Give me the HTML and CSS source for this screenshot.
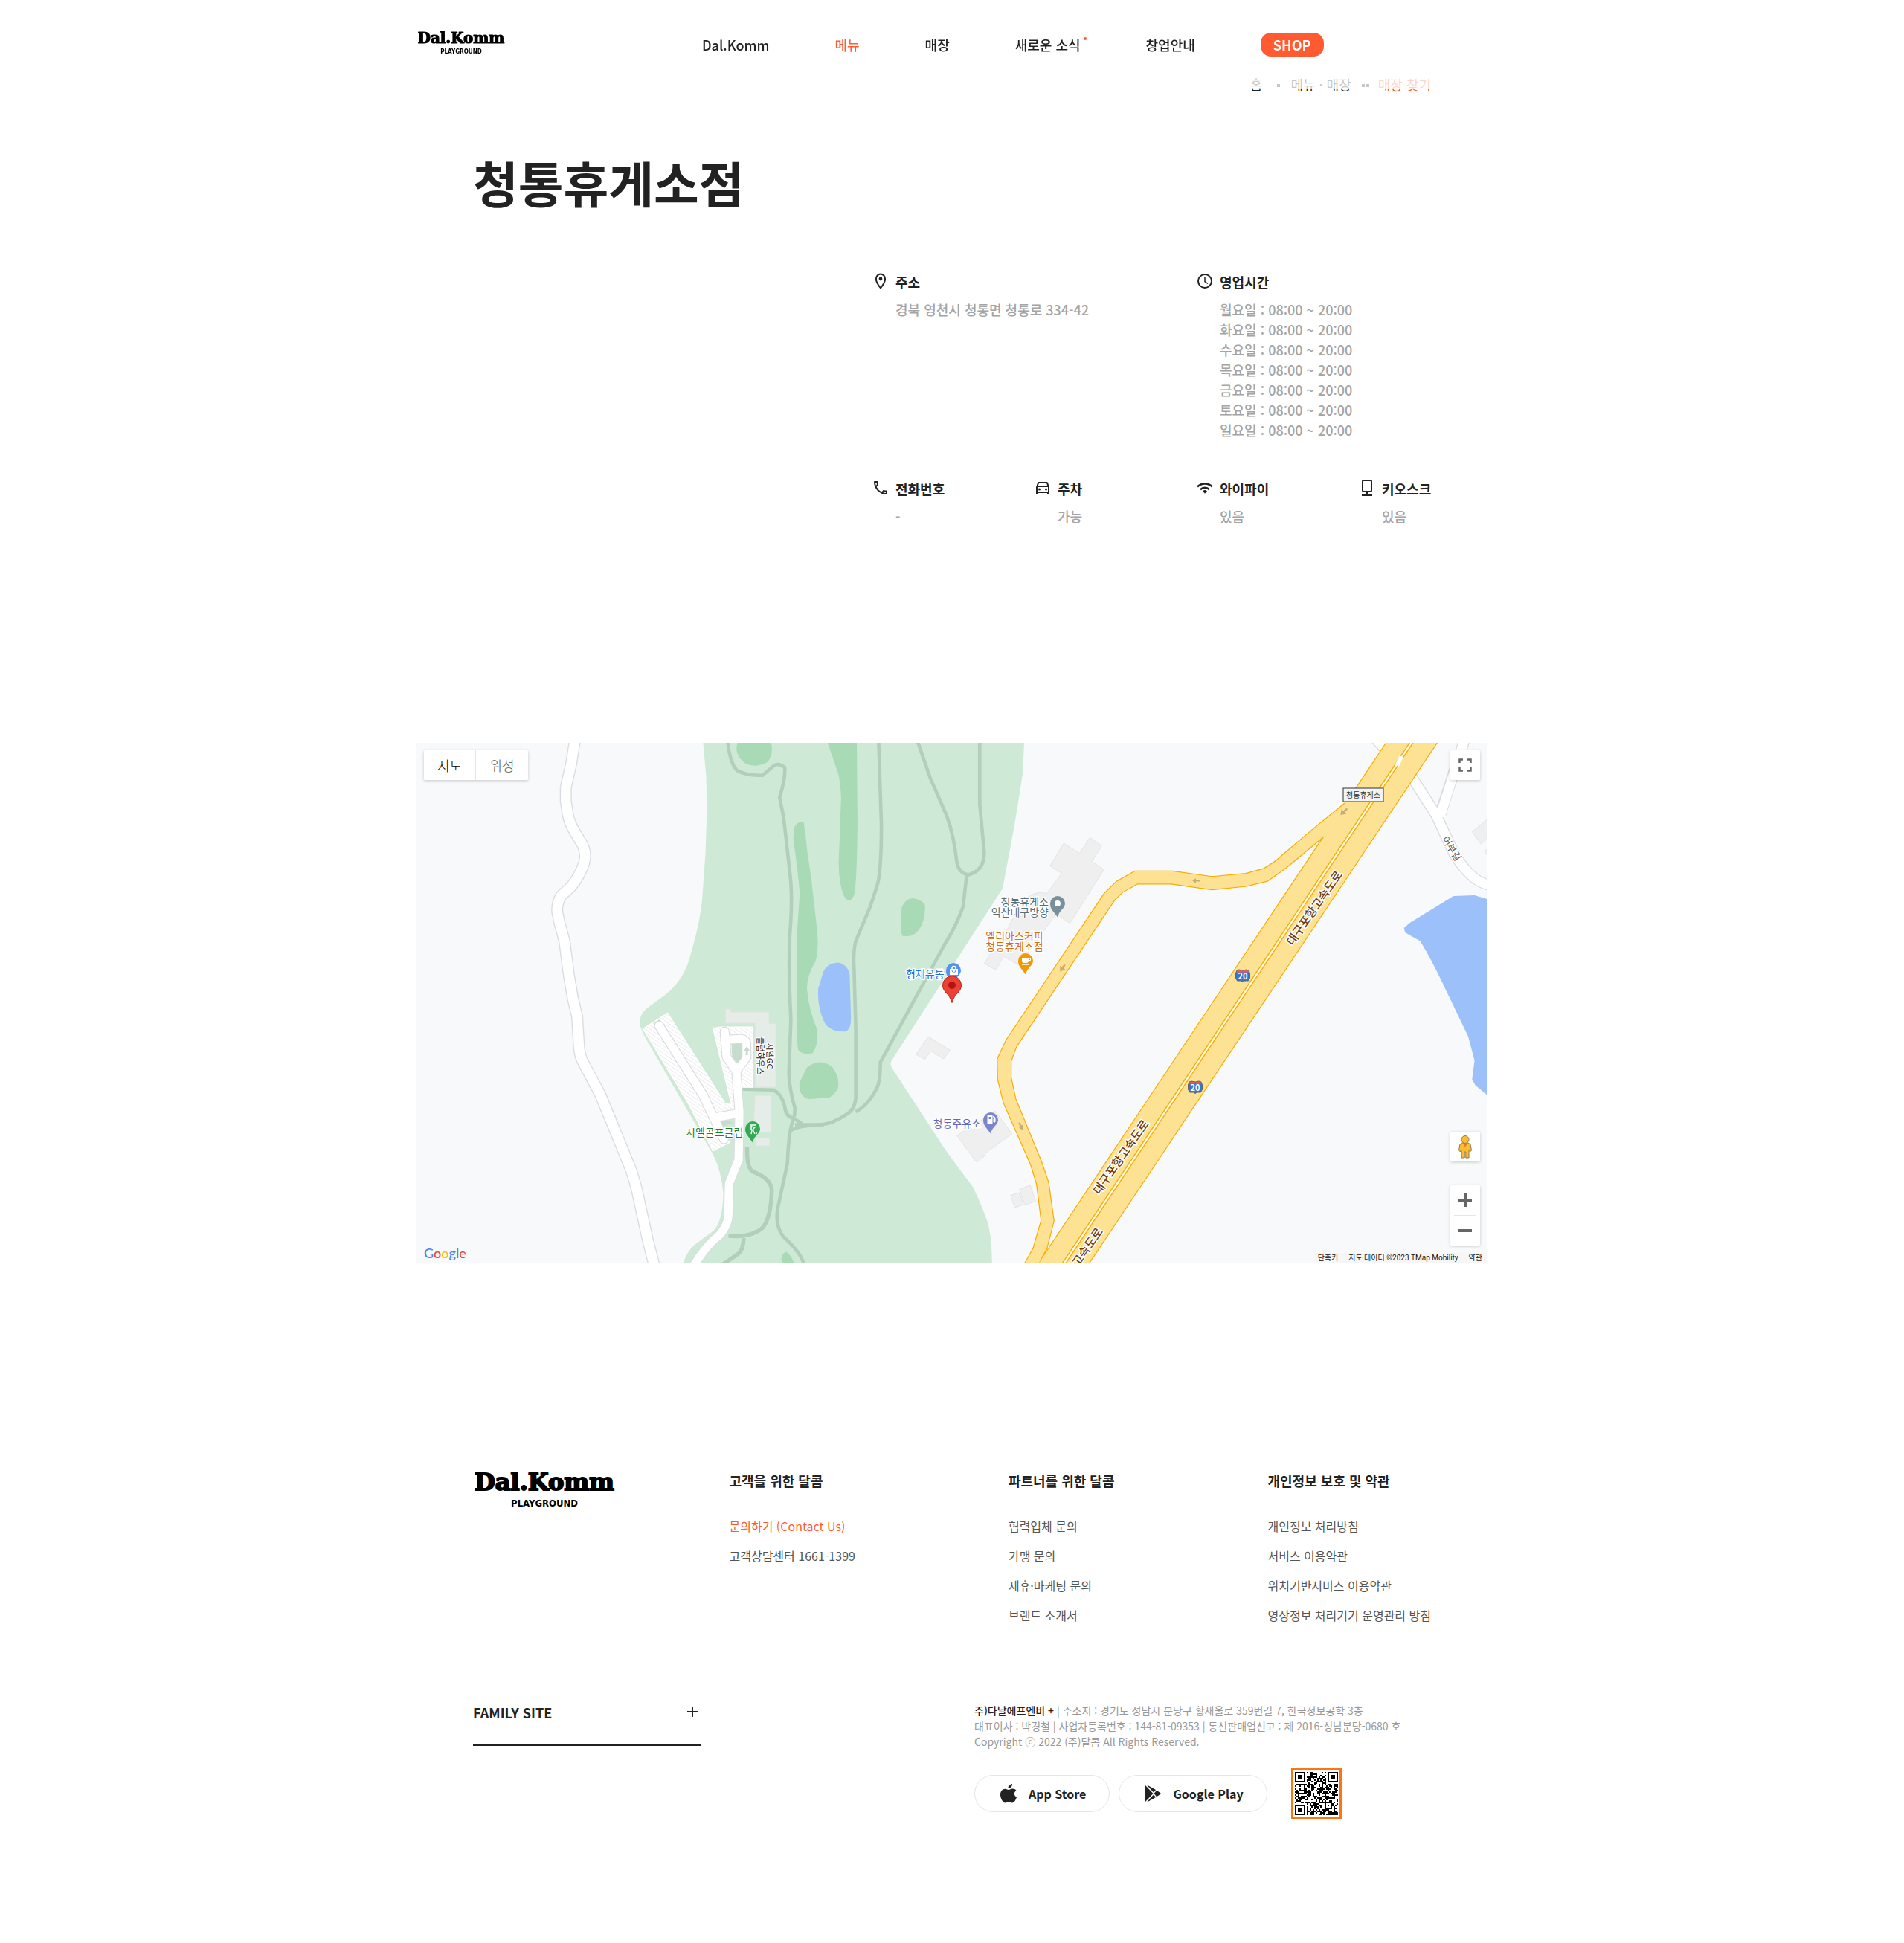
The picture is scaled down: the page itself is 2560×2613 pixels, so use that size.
FILE: index.html
```html
<!DOCTYPE html>
<html lang="ko">
<head>
<meta charset="utf-8">
<meta name="viewport" content="width=device-width, initial-scale=1">
<title>청통휴게소점 | Dal.Komm</title>
<link rel="stylesheet" href="styles.css">
</head>
<body>
<svg class="defs" width="0" height="0" aria-hidden="true">
  <defs>
    <symbol id="logo" viewBox="0 0 192 50">
      <text class="logo-name" x="96" y="26" text-anchor="middle">Dal.Komm</text>
      <text class="logo-sub" x="96" y="48" text-anchor="middle">PLAYGROUND</text>
    </symbol>
    <symbol id="pin" viewBox="-11 -11 22 30">
      <path d="M0-10a10 10 0 0 1 10 10c0 7-7.500 8-10 18.500C-7.500 8-10 7-10 0A10 10 0 0 1 0-10z"/>
    </symbol>
    <symbol id="shield" viewBox="0 0 20 18">
      <path d="M2 2l3-1 5 1 5-1 3 1 1.500 4v6l-2 4H12l-2 1.500L8 16H2.500l-2-4V6z" fill="#3a76c8" stroke="#5d6472"/>
      <path d="M2.500 2.500l3-1 4.500 1 4.500-1 3 1 1 2h-17z" fill="#e06055"/>
    </symbol>
  </defs>
</svg>

<header class="header">
  <div class="header-inner">
    <a class="brand" href="#" aria-label="Dal.Komm Playground"><svg width="120" height="31"><use href="#logo"/></svg></a>
    <nav class="nav">
      <a href="#">Dal.Komm</a>
      <a class="active" href="#">메뉴</a>
      <a href="#">매장</a>
      <a class="fresh" href="#">새로운 소식</a>
      <a href="#">창업안내</a>
      <a class="shop" href="#">SHOP</a>
    </nav>
  </div>
</header>

<main>
  <section class="inner">
    <ol class="crumbs">
      <li><a href="#">홈</a></li>
      <li><a href="#">메뉴 · 매장</a></li>
      <li class="current">매장 찾기</li>
    </ol>
    <h1>청통휴게소점</h1>
    <dl class="info">
      <div class="item wide">
        <svg viewBox="0 0 24 24" fill="none" stroke="#222" stroke-width="2"><path d="M12 21.500C8.500 17 5.900 13 5.900 9.200a6.100 6.600 0 0 1 12.200 0c0 3.800-2.600 7.800-6.100 12.300z"/><circle cx="12" cy="9" r="2.400" fill="#222" stroke="none"/></svg>
        <dt>주소</dt>
        <dd>경북 영천시 청통면 청통로 334-42</dd>
      </div>
      <div class="item wide">
        <svg viewBox="0 0 24 24" fill="none" stroke="#222" stroke-width="2"><circle cx="12" cy="12" r="9"/><path d="M12 7v5.500l4 3" stroke-width="1.500"/></svg>
        <dt>영업시간</dt>
        <dd>월요일 : 08:00 ~ 20:00</dd>
        <dd>화요일 : 08:00 ~ 20:00</dd>
        <dd>수요일 : 08:00 ~ 20:00</dd>
        <dd>목요일 : 08:00 ~ 20:00</dd>
        <dd>금요일 : 08:00 ~ 20:00</dd>
        <dd>토요일 : 08:00 ~ 20:00</dd>
        <dd>일요일 : 08:00 ~ 20:00</dd>
      </div>
      <div class="item">
        <svg viewBox="0 0 24 24" fill="#222"><path d="M6.540 5c.060.890.210 1.760.450 2.590l-1.200 1.200c-.410-1.200-.670-2.470-.760-3.790h1.510m9.860 12.020c.850.240 1.720.390 2.600.450v1.490c-1.320-.090-2.590-.350-3.800-.750l1.200-1.190M7.500 3H4c-.550 0-1 .450-1 1 0 9.390 7.610 17 17 17 .550 0 1-.450 1-1v-3.490c0-.550-.450-1-1-1-1.240 0-2.450-.200-3.570-.570a.84.84 0 0 0-.310-.050c-.260 0-.510.100-.710.290l-2.200 2.200a15.150 15.150 0 0 1-6.590-6.590l2.200-2.200c.280-.280.360-.670.250-1.020A11.360 11.360 0 0 1 8.500 4c0-.550-.450-1-1-1z"/></svg>
        <dt>전화번호</dt>
        <dd>-</dd>
      </div>
      <div class="item">
        <svg viewBox="0 0 24 24" fill="#222"><path d="M18.920 5.010C18.720 4.420 18.160 4 17.500 4h-11c-.660 0-1.210.420-1.420 1.010L3 11v9c0 .550.450 1 1 1h1c.550 0 1-.450 1-1v-1h12v1c0 .550.450 1 1 1h1c.550 0 1-.450 1-1v-9l-2.080-5.990zM6.850 6h10.290l1.040 3H5.810l1.040-3zM19 17H5v-6h14v6z"/><circle cx="7.500" cy="14" r="1.500"/><circle cx="16.500" cy="14" r="1.500"/></svg>
        <dt>주차</dt>
        <dd>가능</dd>
      </div>
      <div class="item">
        <svg viewBox="0 0 24 24" fill="none" stroke="#222" stroke-width="2.600"><path d="M2 10.500c5.500-5.400 14.500-5.400 20 0M6 14.200c3.400-3.200 8.600-3.200 12 0"/><path d="M9 16.500a4.300 4.300 0 0 1 6 0L12 19.700z" fill="#222" stroke="none"/></svg>
        <dt>와이파이</dt>
        <dd>있음</dd>
      </div>
      <div class="item">
        <svg viewBox="0 0 24 24" fill="none" stroke="#222" stroke-width="2"><rect x="6" y="2" width="12" height="15" rx="1.500"/><path d="M12 17v5M5 22h14"/></svg>
        <dt>키오스크</dt>
        <dd>있음</dd>
      </div>
    </dl>
  </section>

  <section class="map" aria-label="매장 지도">
    <svg class="map-art" viewBox="0 0 1440 700" preserveAspectRatio="xMidYMid slice">
      <defs>
        <pattern id="bays" width="9" height="9" patternUnits="userSpaceOnUse" patternTransform="rotate(35)"><rect width="9" height="9" fill="#fff"/><path d="M0 1h9" stroke="#e4e6ea" stroke-width="1.500"/></pattern>
      </defs>
      <rect width="1440" height="700" fill="#f8f9fb"/>
      <g transform="translate(-10 -9) scale(.4592)" fill="none">
        <path fill="#ceead6" d="M861 18L870 120 872 220 868 340 858 480Q850 560 815 670 790 730 740 765L695 798Q670 820 677 850L690 880 890 1225Q915 1275 920 1340 918 1425 890 1450L835 1490Q810 1515 802 1546H1707L1705 1480 1696 1429Q1680 1380 1651 1320 1620 1280 1568 1208L1413 970Q1407 960 1413 950L1738 446 1773 259 1797 109 1801 18z"/>
        <g fill="#a8dab5">
          <path d="M962 18H1060Q1068 55 1050 75 1015 95 985 80 950 55 962 18zM1225 18H1311L1313 250Q1312 400 1305 460 1290 500 1272 465 1258 430 1258 370L1265 180Q1262 125 1255 105zM1127 270Q1135 250 1155 250 1162 290 1165 330L1178 420 1195 570Q1200 630 1190 660 1165 700 1165 740 1170 800 1195 860 1200 900 1182 928 1155 935 1140 920 1133 900 1135 750V590L1144 460 1137 390 1125 300zM1443 500Q1455 475 1475 475 1500 478 1511 495 1512 545 1490 570 1475 590 1445 585 1438 575 1440 530zM1165 970Q1205 940 1240 970 1262 1000 1256 1030 1240 1065 1210 1060L1170 1063Q1140 1055 1143 1015zM1092 1546Q1085 1515 1105 1510 1120 1520 1128 1546z"/>
        </g>
        <path fill="#9cc0f9" d="M1213 690Q1225 664 1255 663 1280 665 1290 695L1294 825Q1295 855 1280 865 1240 868 1220 845 1195 800 1198 740z"/>
        <g stroke="#b2cfbc" stroke-width="10" stroke-linejoin="round">
          <path d="M933 18Q940 80 960 100 985 115 1035 115L1070 85Q1085 78 1100 92 1103 120 1085 180L1097 240 1115 400Q1124 470 1115 580 1110 680 1118 830L1112 990Q1115 1040 1130 1090L1128 1115M1375 18L1383 260Q1383 400 1370 440L1350 500 1308 600Q1300 630 1303 680L1308 860V1060Q1305 1095 1280 1108 1240 1135 1205 1138H1130M1671 18V200L1684 340Q1685 395 1635 407M1490 18L1525 120 1575 235Q1595 290 1604 370 1610 400 1633 405L1622 500Q1600 560 1568 610L1380 955Q1380 1010 1370 1030 1345 1080 1308 1100"/>
          <path d="M975 1034L1065 1036Q1090 1045 1100 1085 1102 1115 1128 1120L1150 1135M1128 1120Q1112 1140 1108 1250L1080 1380Q1070 1430 1095 1465 1150 1515 1155 1546M1215 1138Q1140 1140 1118 1155"/>
          <path stroke-width="12" d="M990 1203Q988 1260 1005 1275 1060 1295 1062 1330 1060 1410 1035 1440 1000 1470 935 1463M980 1470Q978 1505 965 1515L920 1546"/>
        </g>
        <path fill="#e6ece8" stroke="#dde3df" stroke-width="2" d="M926 799H943V808H1054V841H1074V1028H1013V841H926zM1013 1052H1060V1160H1008zM1016 1177H1056V1200H1016z"/>
        <path fill="#efefef" stroke="#e2e2e2" stroke-width="2" d="M1520 880L1585 920 1565 945 1528 922 1510 947 1485 932z"/>
        <path fill="url(#bays)" stroke="#fff" stroke-width="3" d="M685 857L757 811 925 1075 944 1080 890 855 915 852H1005V1028H960L962 1110 915 1125 938 1190 890 1215 820 1080z"/>
        <path fill="#c5ddcd" d="M715 840l18-10 10 10-18 12zM906 1120l45 12-30 10 12 48-10-4z"/>
        <g stroke-linejoin="round">
          <path stroke="#dadce0" stroke-width="35" d="M486 10L475 80 459 150V190L465 230Q470 255 485 280L508 318Q520 345 513 370 500 410 475 440L445 468Q432 490 434 515L440 545 455 600 468 700 480 770 492 820 497 900Q498 930 507 950L560 1050 650 1270 665 1320 700 1480 718 1550"/>
          <path stroke="#fff" stroke-width="29" d="M486 10L475 80 459 150V190L465 230Q470 255 485 280L508 318Q520 345 513 370 500 410 475 440L445 468Q432 490 434 515L440 545 455 600 468 700 480 770 492 820 497 900Q498 930 507 950L560 1050 650 1270 665 1320 700 1480 718 1550"/>
          <g stroke="#dadce0" stroke-width="29" stroke-linecap="round"><path d="M830 1556Q870 1490 910 1460 935 1430 935 1400L937 1310 965 1240 967 1100 958 980 930 940 924 865M958 980L988 940 987 900Q987 888 972 887L932 889M732 848L860 1050 922 1180M905 1115L965 1105"/></g>
          <g stroke="#fff" stroke-width="24" stroke-linecap="round"><path d="M830 1556Q870 1490 910 1460 935 1430 935 1400L937 1310 965 1240 967 1100 958 980 930 940 924 865M958 980L988 940 987 900Q987 888 972 887L932 889M732 848L860 1050 922 1180M905 1115L965 1105"/></g>
        </g>
        <path fill="#c5ddcd" d="M944 901H976V940L962 958 946 940zM989 908l8 13h-5v14h-6v-14h-5z"/>
      </g>
      <g transform="translate(710 -9) scale(.4719 .4592)" fill="none">
        <path fill="#efefef" stroke="#e2e2e2" stroke-width="2" d="M340 314L384 343 414 297 448 321 420 367 454 391 357 548 318 520 212 670 168 645 146 685 113 665 137 628 153 633Q200 500 240 470 270 450 290 462L334 402 300 380zM35 1170L145 1098 192 1165 115 1222 117 1228 90 1247zM188 1345L213 1337 225 1372 200 1381zM213 1328L244 1315 260 1362 229 1373zM1503 280L1547 243V300L1528 316zM1538 338l10-10v22z"/>
        <path fill="#9cc0f9" d="M1309 562L1325 547 1450 468 1510 466 1549 478V1054L1512 1022 1503 1005 1510 950 1492 880 1415 715Q1385 650 1355 600L1312 575z"/>
        <path stroke="#dadce0" stroke-width="33" d="M1215 -8L1265 50M1480 15L1412 230M1325 110L1400 230 1450 340Q1500 430 1560 438"/>
        <path stroke="#fff" stroke-width="27" d="M1215 -8L1265 50M1480 15L1412 235M1325 110L1400 230 1450 340Q1500 430 1560 438"/>
        <path fill="#fde293" stroke="#f9ab00" stroke-width="2.500" d="M260 1555L1264 10H1410L405 1555z"/>
        <path fill="#fde293" d="M1150 188L1040 280 960 350Q940 370 908 388L858 402 762 411 650 395H542L490 425 455 460 175 890 150 945 151 1005 168 1075 245 1255 262 1312 275 1418 252 1500 222 1555H262L292 1500 312 1420 297 1308 278 1250 203 1062 190 1000V952L205 910 485 480 508 457 550 433H645L762 450 860 440 920 425 975 385 1080 295 1160 240z"/>
        <path stroke="#f9ab00" stroke-width="2.500" d="M1140 196L1040 280 960 350Q940 370 908 388L858 402 762 411 650 395H542L490 425 455 460 175 890 150 945 151 1005 168 1075 245 1255 262 1312 275 1418 252 1500 222 1555M277 1528L292 1500 312 1420 297 1308 278 1250 203 1062 190 1000V952L205 910 485 480 508 457 550 433H645L762 450 860 440 920 425 975 385 1080 295L1070 308"/>
        <path stroke="#f9ab00" stroke-width="11" d="M333 1555L1336 10"/>
        <path stroke="#fffbe8" stroke-width="5" d="M333 1555L1336 10"/>
        <path stroke="#fff" stroke-width="12" d="M1289 86L1302 60"/>
        <path fill="#c8ac78" d="M1128 231l3-17 5 5 9-9 4 4-9 9 4 5zM706 423l10-7v5h13v5h-13v5zM329 689v-16l5 3 7-8 4 3-6 9 5 3zM222 1154l-12-10 5-2-5-9 5-2 4 9 5-2z"/>
      </g>
      <g class="road-name">
        <text transform="translate(1207 222) rotate(-55)" dy="6">대구포항고속도로</text>
        <text transform="translate(947 557) rotate(-55)" dy="6">대구포항고속도로</text>
        <text transform="translate(885 702) rotate(-55)" dy="6">대구포항고속도로</text>
      </g>
      <text class="street" transform="translate(1392 142) rotate(58)" dy="5">어부길</text>
      <g class="club"><text transform="translate(475 421) rotate(90)" dy="4">시엘GC</text><text transform="translate(462 421) rotate(90)" dy="4">클럽하우스</text></g>
      <rect x="1246" y="61" width="54" height="18" fill="#f1f3f4" stroke="#333"/>
      <text class="exit" x="1273" y="74">청통휴게소</text>
      <g class="shields">
        <use href="#shield" x="1101" y="304" width="20" height="18"/><text x="1111" y="318">20</text>
        <use href="#shield" x="1037" y="454" width="20" height="18"/><text x="1047" y="468">20</text>
      </g>
      <g class="poi">
        <text x="658" y="316" fill="#1a73e8">형제유통</text>
        <text x="362" y="529" fill="#188038">시엘골프클럽</text>
        <text class="end" x="850" y="219" fill="#546e7a">청통휴게소</text>
        <text class="end" x="850" y="233" fill="#546e7a">익산대구방향</text>
        <text class="mid" x="804" y="265" fill="#d56e0c">엘리아스커피</text>
        <text class="mid" x="804" y="279" fill="#d56e0c">청통휴게소점</text>
        <text class="end" x="759" y="517" fill="#5c6bc0">청통주유소</text>
      </g>
      <use href="#pin" x="851" y="205" width="22" height="30" fill="#78909c"/><circle cx="862" cy="216" r="4" fill="#fff"/>
      <use href="#pin" x="441" y="508" width="22" height="30" fill="#34a853"/>
      <path d="M448 514h9M450 516l5 1-4 4-1 5M452 520l3 6M450 515v5" stroke="#fff" stroke-width="1.500" fill="none"/><circle cx="457" cy="525" r="1" fill="#fff"/>
      <use href="#pin" x="761" y="496" width="22" height="30" fill="#7986cb"/>
      <path d="M768 501h6v11h-6zM775 502l3 2v6h-2v-4" fill="#fff" stroke="#fff"/><path d="M769.500 503h3v3h-3z" fill="#7986cb"/>
      <use href="#pin" x="808" y="282" width="22" height="30" fill="#f29900"/>
      <path d="M814 289h9v4a3 3 0 0 1-3 3h-3a3 3 0 0 1-3-3zM814 297.500h10v1.200h-10z" fill="#fff"/><path d="M823 290h2.500v2.500H823" fill="none" stroke="#fff"/>
      <use href="#pin" x="711" y="295" width="22" height="30" fill="#5491f5"/>
      <path d="M717 304h11v8h-11z" fill="#fff"/><path d="M720 304v-1a2.500 2.500 0 0 1 5 0v1" fill="none" stroke="#fff" stroke-width="1.500"/><path d="M720 306a2.500 2.500 0 0 0 5 0" fill="none" stroke="#5491f5"/>
      <path d="M720 313.500a12.500 12.500 0 0 1 12.500 12.500c0 9.500-9 10.500-12.500 23.500-3.500-13-12.500-14-12.500-23.500A12.500 12.500 0 0 1 720 313.500z" fill="#ea4335" stroke="#b8221a"/><circle cx="720" cy="326" r="5" fill="#b31412"/>
    </svg>
    <div class="map-types"><button class="on" type="button">지도</button><button type="button">위성</button></div>
    <button class="map-btn full" type="button" aria-label="전체 화면"><svg width="18" height="18" fill="none" stroke="#666" stroke-width="2.500"><path d="M1.500 6V1.500H6M12 1.500h4.500V6M16.500 12v4.500H12M6 16.500H1.500V12"/></svg></button>
    <div class="map-side">
      <button class="map-btn" type="button" aria-label="스트리트 뷰"><svg width="18" height="31" viewBox="0 0 18 31"><path d="M5 10h8l3 2 1.500 8-2 2-1.500-3v11H9.800V22H8.200v8H4V19l-1.500 3-2-2L2 12z" fill="#fbbc2d" stroke="#8a7a55"/><circle cx="9" cy="5.500" r="5" fill="#fbbc2d" stroke="#8a7a55"/><path d="M6 10.500h6L9 16z" fill="#e37a30"/></svg></button>
      <div class="zoom">
        <button type="button" aria-label="확대"><svg width="18" height="18" stroke="#666" stroke-width="4"><path d="M0 9h18M9 0v18"/></svg></button>
        <button type="button" aria-label="축소"><svg width="18" height="18" stroke="#666" stroke-width="4"><path d="M0 9h18"/></svg></button>
      </div>
    </div>
    <div class="google" aria-label="Google"><span class="b">G</span><span class="r">o</span><span class="y">o</span><span class="b">g</span><span class="g">l</span><span class="r">e</span></div>
    <div class="credits"><button type="button">단축키</button><span>지도 데이터 ©2023 TMap Mobility</span><a href="#">약관</a></div>
  </section>
</main>

<footer class="inner footer">
  <div class="foot-top">
    <a class="foot-logo" href="#" aria-label="Dal.Komm Playground"><svg width="192" height="50"><use href="#logo"/></svg></a>
    <section>
      <h2>고객을 위한 달콤</h2>
      <ul><li><a class="accent" href="#">문의하기 (Contact Us)</a></li><li><a href="#">고객상담센터 1661-1399</a></li></ul>
    </section>
    <section>
      <h2>파트너를 위한 달콤</h2>
      <ul><li><a href="#">협력업체 문의</a></li><li><a href="#">가맹 문의</a></li><li><a href="#">제휴·마케팅 문의</a></li><li><a href="#">브랜드 소개서</a></li></ul>
    </section>
    <section>
      <h2>개인정보 보호 및 약관</h2>
      <ul><li><a href="#">개인정보 처리방침</a></li><li><a href="#">서비스 이용약관</a></li><li><a href="#">위치기반서비스 이용약관</a></li><li><a href="#">영상정보 처리기기 운영관리 방침</a></li></ul>
    </section>
  </div>
  <div class="foot-bottom">
    <button class="family" type="button"><span>FAMILY SITE</span><svg width="14" height="14" stroke="#222" stroke-width="2"><path d="M0 7h14M7 0v14"/></svg></button>
    <div class="company">
      <p><strong>주)다날에프엔비 +</strong> | 주소지 : 경기도 성남시 분당구 황새울로 359번길 7, 한국정보공학 3층</p>
      <p>대표이사 : 박경철 | 사업자등록번호 : 144-81-09353 | 통신판매업신고 : 제 2016-성남분당-0680 호</p>
      <p>Copyright ⓒ 2022 (주)달콤 All Rights Reserved.</p>
      <div class="apps">
        <a class="app" href="#"><svg width="22" height="26" viewBox="0 0 22 26" fill="#222"><path d="M16 0c.3 3.200-2.500 6-5.500 6C10.200 3 13 .3 16 0zM21.500 9c-3.800 2.200-3.300 7.200.5 8.700-1 3.300-3.500 7.800-6 7.800-1.800 0-2.500-1-4.700-1s-3 1-4.600 1C3.500 25.500 0 19.500 0 14.500 0 9.500 3 6.700 6.300 6.700c2 0 3.500 1.300 4.900 1.300 1.300 0 3-1.400 5.400-1.400 1.900 0 3.700.8 4.900 2.400z"/></svg>App Store</a>
        <a class="app" href="#"><svg width="22" height="24" viewBox="0 0 22 24" fill="#222"><path d="M1 1l10.500 11L1 23zM2.500 0L15 7l-3 3.500zM2.500 24L15 17l-3-3.500zM16 7.700l5.500 3.500v1.600L16 16.300 12.700 12z"/></svg>Google Play</a>
        <svg class="qr" id="qr" width="68" height="68" viewBox="0 0 68 68" role="img" aria-label="앱 다운로드 QR 코드"></svg>
      </div>
    </div>
  </div>
</footer>
<script src="qr.js"></script>
</body>
</html>
```
FILE: styles.css
```css
* { box-sizing: border-box; }
body {
  margin: 0;
  background: #fff;
  color: #222;
  font: 500 18px/27px "Noto Sans CJK KR", "Noto Sans", sans-serif;
}
a { color: inherit; text-decoration: none; }
button { border: 0; padding: 0; background: none; color: inherit; font: inherit; cursor: pointer; }
h1, h2, p, ul, ol, dl, dd { margin: 0; padding: 0; list-style: none; }
svg { display: block; }
.defs { position: absolute; }
.logo-name { font: 700 32px "DejaVu Serif", serif; fill: #000; stroke: #000; stroke-width: 2px; stroke-linejoin: round; }
.logo-sub { font: 700 13px "Liberation Sans Narrow", "DejaVu Sans Condensed", sans-serif; fill: #000; }

.header { position: fixed; z-index: 2; top: 0; left: 0; right: 0; height: 120px; background: rgba(255, 255, 255, .75); }
.header-inner { display: flex; align-items: flex-start; max-width: 1440px; margin: 0 auto; padding-top: 42px; }
.nav { display: flex; align-items: center; gap: 88px; margin-left: 264px; padding-top: 2px; line-height: 32px; }
.nav .active { color: #ff5a30; }
.fresh { position: relative; }
.fresh::after { content: ""; position: absolute; top: 6px; right: -8px; width: 4px; height: 4px; border-radius: 2px; background: #ff5a30; }
.shop { padding: 0 17px; border-radius: 14px; background: #ff5a30; color: #fff; font-weight: 700; }

.inner { max-width: 1440px; margin: 0 auto; padding: 0 76px; }
.crumbs { display: flex; justify-content: flex-end; padding-top: 100px; font-weight: 400; }
.crumbs li { display: flex; align-items: center; }
.crumbs li + li::before { content: ""; width: 4px; height: 4px; margin: 2px 14px 0 20px; background: #222; }
.crumbs .current { color: #ff5a30; }
.crumbs .current::before { width: 10px; margin: 2px 12px 0 14px; background: linear-gradient(90deg, #222 4px, transparent 4px 6px, #222 6px); }
h1 { margin-top: 69px; font-size: 66px; line-height: 96px; }
.info { display: grid; grid-template-columns: repeat(3, 218px) 98px; justify-content: end; row-gap: 52px; margin-top: 74px; }
.item { position: relative; padding-left: 32px; white-space: nowrap; }
.item svg { position: absolute; left: 0; top: 0; width: 24px; height: 24px; }
.item dt { margin-bottom: 10px; font-weight: 700; }
.item dd { color: #a4a4a4; }
.wide { grid-column: span 2; }

.map { position: relative; max-width: 1440px; height: 700px; margin: 291px auto 0; overflow: hidden; background: #f8f9fb; }
.map-art { width: 100%; height: 100%; font-family: "Noto Sans CJK KR", sans-serif; }
.map-art text { paint-order: stroke; stroke: #fff; stroke-width: 3px; stroke-linejoin: round; }
.road-name { font-size: 16px; font-weight: 500; fill: #6e3c0e; text-anchor: middle; }
.street { font-size: 13px; font-weight: 400; fill: #55595e; text-anchor: middle; }
.club { font-size: 11px; font-weight: 400; fill: #202124; text-anchor: middle; }
.map-art .exit { font-size: 10px; font-weight: 400; fill: #333; stroke: none; text-anchor: middle; }
.map-art .shields text { font-size: 11px; font-weight: 700; fill: #fff; stroke: none; text-anchor: middle; }
.poi { font-size: 14px; font-weight: 400; }
.poi .end { text-anchor: end; }
.poi .mid { text-anchor: middle; }
.map-types, .map-btn, .zoom { border-radius: 2px; background: #fff; box-shadow: 0 1px 4px rgba(0, 0, 0, .2); }
.map-types { position: absolute; top: 10px; left: 10px; display: flex; height: 40px; color: #565656; font-weight: 300; }
.map-types button { width: 70px; }
.map-types .on { border-right: 1px solid #e6e6e6; color: #000; }
.map-btn { display: grid; place-items: center; width: 40px; height: 40px; }
.full { position: absolute; top: 10px; right: 10px; }
.map-side { position: absolute; right: 10px; bottom: 24px; display: grid; gap: 32px; }
.zoom { display: grid; width: 40px; padding: 0 5px; }
.zoom button { display: grid; place-items: center; height: 40px; }
.zoom button + button { height: 41px; border-top: 1px solid #e6e6e6; }
.google { position: absolute; left: 10px; bottom: 2px; font: 500 18px/24px Lato, sans-serif; text-shadow: 0 0 2px #fff; }
.google .b { color: #4285f4; }
.google .r { color: #ea4335; }
.google .y { color: #fbbc04; }
.google .g { color: #34a853; }
.credits { position: absolute; right: 0; bottom: 0; display: flex; gap: 14px; padding: 0 7px 0 5px; background: rgba(245, 245, 245, .7); color: #111; font: 400 10px/14px Roboto, "Noto Sans CJK KR", sans-serif; }

.footer { padding-top: 279px; padding-bottom: 167px; }
.foot-top { display: flex; gap: 206px; padding-bottom: 52px; border-bottom: 1px solid #e5e5e5; }
.foot-logo { flex: 1; margin-right: -66px; }
.foot-top h2 { margin-bottom: 35px; font-size: 18px; line-height: 27px; }
.foot-top ul { display: grid; gap: 16px; color: #555; font-size: 16px; font-weight: 400; line-height: 24px; white-space: nowrap; }
.accent { color: #ff5a30; }
.foot-bottom { display: flex; justify-content: space-between; align-items: flex-start; padding-top: 53px; }
.family { display: flex; justify-content: space-between; width: 307px; height: 58px; padding: 0 5px 0 0; border-bottom: 2px solid #222; font-weight: 700; }
.family svg { margin-top: 5px; }
.company { width: 614px; color: #999; font-size: 14px; font-weight: 400; line-height: 21px; white-space: nowrap; }
.company strong { color: #222; font-weight: 500; }
.apps { display: flex; align-items: center; gap: 12px; margin-top: 25px; }
.app { display: flex; align-items: center; gap: 16px; height: 50px; padding: 0 31px 0 34px; border: 1px solid #e5e5e5; border-radius: 25px; color: #222; font-size: 16px; font-weight: 700; }
.qr { margin-left: 20px; }
```
FILE: qr.js
```js
// Draws the app download code: a 29 x 29 grid with three finder squares.
const NS = 'http://www.w3.org/2000/svg';
const svg = document.getElementById('qr');
const N = 29;

function add(tag, attrs) {
  const el = document.createElementNS(NS, tag);
  for (const key in attrs) el.setAttribute(key, attrs[key]);
  svg.appendChild(el);
}

add('rect', { x: 1.5, y: 1.5, width: 65, height: 65, fill: '#fff', stroke: '#ff7410', 'stroke-width': 3 });

let seed = 20223;
let d = '';
for (let r = 0; r < N; r++) {
  for (let c = 0; c < N; c++) {
    seed = (seed * 1103515245 + 12345) % 2147483648;
    const finder = (r < 8 && (c < 8 || c > 20)) || (r > 20 && c < 8);
    if (!finder && seed / 2147483648 > 0.48) d += `M${5 + c * 2} ${5 + r * 2}h2v2h-2z`;
  }
}
add('path', { d, fill: '#000', 'shape-rendering': 'crispEdges' });

for (const [x, y] of [[5, 5], [49, 5], [5, 49]]) {
  add('rect', { x: x + 1, y: y + 1, width: 12, height: 12, fill: '#fff', stroke: '#000', 'stroke-width': 2 });
  add('rect', { x: x + 4, y: y + 4, width: 6, height: 6 });
}
add('rect', { x: 46, y: 46, width: 8, height: 8, fill: '#fff', stroke: '#000', 'stroke-width': 2 });
add('rect', { x: 49, y: 49, width: 2, height: 2 });
```
